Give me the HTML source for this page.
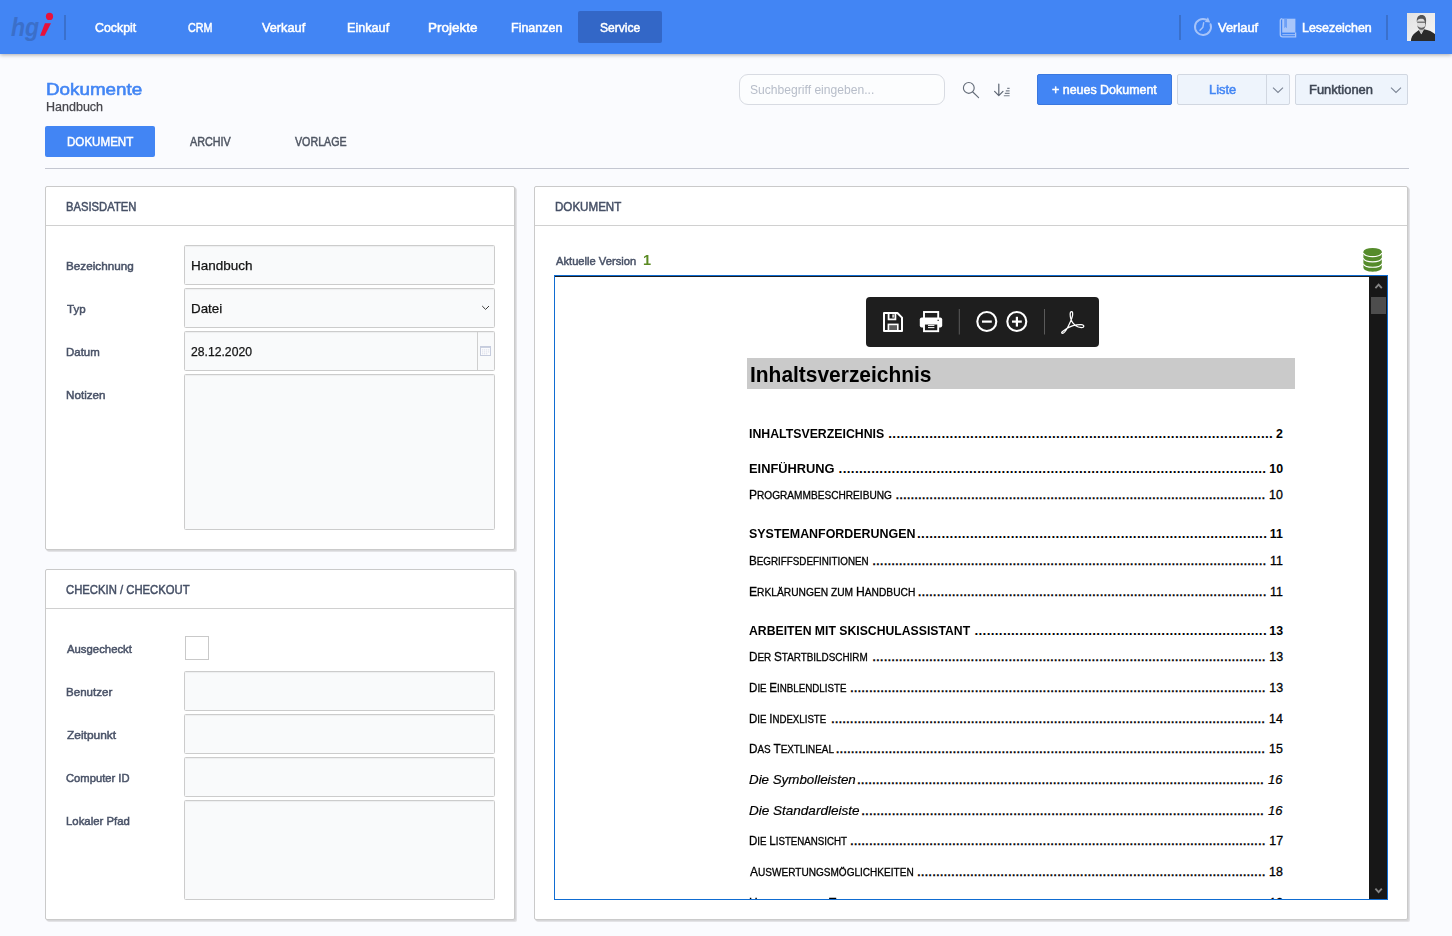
<!DOCTYPE html>
<html lang="de">
<head>
<meta charset="utf-8">
<title>Dokumente - Handbuch</title>
<style>
*{box-sizing:border-box;margin:0;padding:0}
html,body{width:1452px;height:936px;overflow:hidden}
body{background:#fafbfe;font-family:"Liberation Sans",sans-serif;color:#3c4858;position:relative}
.abs{position:absolute}
svg{position:absolute;overflow:visible}
/* generic positioned text: 48px line box, horizontal scale from left edge */
.t{position:absolute;height:48px;line-height:48px;white-space:pre;transform-origin:0 50%;font-family:"Liberation Sans",sans-serif}
.t i{font-style:normal}
/* NAV */
#nav{position:absolute;left:0;top:0;width:1452px;height:54px;background:#4285f4;box-shadow:0 1px 4px rgba(0,0,0,.32)}
.sep{position:absolute;top:15px;width:2px;height:25px;background:#3a70cc}
#svc{position:absolute;left:578px;top:11px;width:84px;height:32px;background:#3367c7;border-radius:2px}
/* HEADER */
#search{position:absolute;left:739px;top:74px;width:206px;height:31px;border:1px solid #d8dbe2;border-radius:9px;background:#fcfdfe}
.btn{position:absolute;top:74px;height:31px;border-radius:2px}
.btn.light{background:#eef4fc;border:1px solid #d1d7e1}
#hr{position:absolute;left:45px;top:168px;width:1364px;height:1px;background:#c4c7d1}
/* PANELS */
.panel{position:absolute;background:#fff;border:1px solid #cacaca;border-radius:2px;box-shadow:1px 1px 0 #d6d6d8,2px 2px 0 #e3e3e6}
.hdline{position:absolute;left:0;right:0;top:38px;height:1px;background:#d0d0d0}
.inp{position:absolute;left:184px;width:311px;height:40px;background:#f9fafb;border:1px solid #cccccc;border-radius:1.5px;box-shadow:inset 0 1px 1px rgba(0,0,0,.05)}
</style>
</head>
<body>
<!-- ================= NAV ================= -->
<nav id="nav">
  <svg style="left:0;top:0" width="80" height="53" viewBox="0 0 80 53">
    <text x="10.9" y="35.7" font-family="Liberation Sans, sans-serif" font-style="italic" font-weight="bold" font-size="26.4" fill="#3b6fc9" textLength="28.2" lengthAdjust="spacingAndGlyphs">hg</text>
    <circle cx="49.5" cy="16.4" r="3.6" fill="#e8113a"/>
    <path d="M44.9 23.2 L51 23.2 L44.6 35.8 L40.1 35.8 Z" fill="#e8113a"/>
  </svg>
  <div class="sep" style="left:64px"></div>
  <div id="svc"></div>
  <div class="sep" style="left:1179px"></div>
  <!-- history icon -->
  <svg style="left:1190px;top:14px" width="26" height="26" viewBox="0 0 26 26" fill="none" stroke="#a6c3f9" stroke-linecap="round">
    <path d="M20.5 10.2 A8 8 0 1 1 16.4 5.7" stroke-width="2"/>
    <path d="M14.9 8.1 L17.9 3.2 L20.2 8.6 Z" fill="#a6c3f9" stroke="none"/>
    <path d="M12.9 13.2 L13.7 8.6 M12.9 13.2 L10 16.3" stroke-width="1.4"/>
  </svg>
  <!-- book icon -->
  <svg style="left:1279px;top:16.6px" width="20" height="22" viewBox="0 0 20 22">
    <path d="M3.2 1.7 H16.4 V15.6 H3.2 Z" fill="#a9c6fa"/>
    <path d="M5.2 1.7 V11.2 L6.6 10 L8 11.2 V1.7 Z" fill="#6ea0f6"/>
    <path d="M3.2 1.7 C2 1.7 1.3 2.5 1.3 3.6 V17.4 C1.3 18.9 2.2 19.8 3.6 19.8 H16.6 V15.6" fill="none" stroke="#a9c6fa" stroke-width="1.3"/>
    <path d="M3.4 17.7 H16.4" stroke="#a9c6fa" stroke-width="1"/>
  </svg>
  <div class="sep" style="left:1386px"></div>
  <!-- avatar -->
  <svg style="left:1407px;top:13px" width="28" height="28" viewBox="0 0 28 28">
    <defs>
      <clipPath id="avc"><rect width="28" height="28"/></clipPath>
      <linearGradient id="avg" x1="0" y1="0" x2="1" y2="1"><stop offset="0" stop-color="#e2e2e2"/><stop offset="1" stop-color="#f6f6f6"/></linearGradient>
      <filter id="avb" x="-10%" y="-10%" width="120%" height="120%"><feGaussianBlur stdDeviation=".45"/></filter>
    </defs>
    <rect width="28" height="28" fill="url(#avg)"/>
    <g clip-path="url(#avc)"><g filter="url(#avb)">
      <path d="M3.8 29 C4 24.4 5.6 21.6 8.6 19.6 L12 17 L14.3 21.2 L16.9 16.2 C21.2 17 25.6 18.6 28.6 21.6 L28.6 29 Z" fill="#2a2a2a"/>
      <path d="M12 14.6 L16.6 14.6 L16.9 16.4 L14.3 21.2 L12 17.2 Z" fill="#c4c4c4"/>
      <ellipse cx="14.2" cy="10.6" rx="4.3" ry="5.3" fill="#dddddd"/>
      <path d="M10.3 12.3 C10.8 15.9 12.6 16.8 14.4 16.8 C16.7 16.8 18.5 15.2 18.7 11.2 C18.1 13.9 16.5 14.7 14.4 14.7 C12.5 14.7 11 14 10.3 12.3 Z" fill="#636363"/>
      <path d="M9.9 9.2 C9.2 4.6 11.5 2 14.6 2 C17.9 2 19.7 4.6 19 9.6 L18.5 13.4 C18.1 10 17.7 7.2 16.5 6.3 C14.5 5.3 12 6 10.6 7 Z" fill="#555"/>
      <rect x="10.2" y="8.5" width="8.1" height="1.5" fill="#7a7a7a"/>
    </g></g>
  </svg>
</nav>

<!-- ================= HEADER ================= -->
<div id="search"></div>
<svg style="left:960px;top:80px" width="22" height="20" viewBox="0 0 22 20" fill="none" stroke="#646c79" stroke-width="1.15" stroke-linecap="round">
  <circle cx="8.8" cy="7.9" r="5.4"/><path d="M12.8 12 L18.6 17.6"/>
</svg>
<svg style="left:992px;top:82px" width="20" height="16" viewBox="0 0 20 16" fill="none" stroke="#5d6573" stroke-width="1.2" stroke-linecap="round" stroke-linejoin="round">
  <path d="M6.8 2 V13.4 M2.6 9.4 L6.8 13.6 L11 9.4"/>
  <path d="M15.2 6.4 H17.6 M13.8 8.9 H17.6 M12.8 11.4 H17.6 M11.8 13.8 H17.6" stroke-width="1.1" stroke-linecap="butt" stroke="#7a818d"/>
</svg>
<div class="btn" style="left:1037px;width:135px;background:#4285f4;border:1px solid #3a77de"></div>
<div class="btn light" style="left:1177px;width:113px"></div>
<div class="abs" style="left:1266px;top:75px;width:1px;height:29px;background:#d1d7e1"></div>
<svg style="left:1272px;top:86px" width="12" height="8" viewBox="0 0 12 8" fill="none" stroke="#7b8494" stroke-width="1.1"><path d="M1 1.6 L6 6.4 L11 1.6"/></svg>
<div class="btn light" style="left:1295px;width:113px"></div>
<svg style="left:1390px;top:86px" width="12" height="8" viewBox="0 0 12 8" fill="none" stroke="#7b8494" stroke-width="1.1"><path d="M1 1.6 L6 6.4 L11 1.6"/></svg>

<!-- ================= TABS ================= -->
<div class="abs" style="left:45px;top:126px;width:110px;height:31px;background:#4285f4;border-radius:2px"></div>
<div id="hr"></div>

<!-- ================= PANEL BASISDATEN ================= -->
<section class="panel" style="left:45px;top:186px;width:470px;height:364px"><div class="hdline"></div></section>
<div class="inp" style="top:245px"></div>
<div class="inp" style="top:288px"></div>
<svg style="left:481px;top:304px" width="10" height="8" viewBox="0 0 10 8" fill="none" stroke="#3a3a3a" stroke-width="1"><path d="M1.2 2 L4.6 5.4 L8 2"/></svg>
<div class="inp" style="top:331px"></div>
<div class="abs" style="left:477px;top:332px;width:1px;height:38px;background:#cfcfcf"></div>
<svg style="left:480px;top:346px" width="11" height="10" viewBox="0 0 11 10">
  <rect x=".5" y=".5" width="10" height="9" fill="#fbfbfd" stroke="#c6ccdd" stroke-width="1"/>
  <rect x=".5" y=".5" width="10" height="1.4" fill="#c6ccdd"/>
  <g fill="#d3d7e4"><rect x="2.2" y="3.4" width="1" height="1"/><rect x="4.2" y="3.4" width="1" height="1"/><rect x="6.2" y="3.4" width="1" height="1"/><rect x="8.2" y="3.4" width="1" height="1"/><rect x="2.2" y="5.4" width="1" height="1"/><rect x="4.2" y="5.4" width="1" height="1"/><rect x="6.2" y="5.4" width="1" height="1"/><rect x="8.2" y="5.4" width="1" height="1"/><rect x="2.2" y="7.3" width="1" height="1"/><rect x="4.2" y="7.3" width="1" height="1"/><rect x="6.2" y="7.3" width="1" height="1"/></g>
</svg>
<div class="inp" style="top:374px;height:156px"></div>

<!-- ================= PANEL CHECKIN ================= -->
<section class="panel" style="left:45px;top:569px;width:470px;height:351px"><div class="hdline"></div></section>
<div class="abs" style="left:185px;top:636px;width:24px;height:24px;background:#fff;border:1px solid #c9c9c9"></div>
<div class="inp" style="top:671px"></div>
<div class="inp" style="top:714px"></div>
<div class="inp" style="top:757px"></div>
<div class="inp" style="top:800px;height:100px"></div>

<!-- ================= PANEL DOKUMENT ================= -->
<section class="panel" style="left:534px;top:186px;width:874px;height:734px"><div class="hdline"></div></section>
<!-- db icon -->
<svg style="left:1363px;top:247px" width="20" height="26" viewBox="0 0 20 26">
  <path d="M.4 5 V20.6 C.4 23 4.6 24.8 9.6 24.8 C14.6 24.8 18.8 23 18.8 20.6 V5 Z" fill="#558b2b"/>
  <ellipse cx="9.6" cy="4.8" rx="9.2" ry="3.9" fill="#558b2b"/>
  <g fill="none" stroke="#fff" stroke-width="1.1"><path d="M.2 6 C1.4 8.4 5 9.6 9.6 9.6 C14.2 9.6 17.8 8.4 19 6"/><path d="M.2 11.3 C1.4 13.7 5 14.9 9.6 14.9 C14.2 14.9 17.8 13.7 19 11.3"/><path d="M.2 16.7 C1.4 19.1 5 20.3 9.6 20.3 C14.2 20.3 17.8 19.1 19 16.7"/></g>
</svg>
<!-- pdf frame -->
<div id="frame" class="abs" style="left:554px;top:275px;width:834px;height:625px;background:#fff;border:1px solid #0f6cd2;overflow:hidden">
  <div class="abs" style="left:0;top:0;width:814px;height:1px;background:#1d1d1d"></div>
  <!-- coordinates inside frame are offset by (555,276) -->
  <div id="pdf" class="abs" style="left:-555px;top:-276px;width:1452px;height:936px">
    <div class="abs" style="left:747px;top:358px;width:548px;height:31px;background:#cacaca"></div>
    <span class="t" style="left:749.55px;top:351px;font-size:21.6px;color:#000;transform:scaleX(0.9694);font-weight:bold;">Inhaltsverzeichnis</span>
    <span class="t" style="left:748.95px;top:410px;font-size:12.4px;color:#000;transform:scaleX(0.9937);font-weight:bold;">INHALTSVERZEICHNIS</span>
    <span class="t" style="left:1276.00px;top:410px;font-size:12.4px;color:#000;transform:scaleX(1.0000);font-weight:bold;">2</span>
    <span class="t" style="left:888.20px;top:410px;font-size:13.5px;color:#000;letter-spacing:0.345px;font-weight:bold;">..............................................................................................</span>
    <span class="t" style="left:748.92px;top:445px;font-size:12.4px;color:#000;transform:scaleX(1.0358);font-weight:bold;">EINFÜHRUNG</span>
    <span class="t" style="left:1269.25px;top:445px;font-size:12.4px;color:#000;transform:scaleX(1.0000);font-weight:bold;">10</span>
    <span class="t" style="left:838.60px;top:445px;font-size:13.5px;color:#000;letter-spacing:0.324px;font-weight:bold;">.........................................................................................................</span>
    <span class="t" style="left:749.27px;top:471px;font-size:12.4px;color:#000;transform:scaleX(0.9719);-webkit-text-stroke:0.3px;">P<i style="font-size:10.42px">ROGRAMMBESCHREIBUNG</i></span>
    <span class="t" style="left:1269.00px;top:471px;font-size:12.4px;color:#000;transform:scaleX(1.0000);-webkit-text-stroke:0.3px;">10</span>
    <span class="t" style="left:895.40px;top:471px;font-size:13.5px;color:#000;letter-spacing:0.024px;-webkit-text-stroke:0.5px;">..................................................................................................</span>
    <span class="t" style="left:749.20px;top:510px;font-size:12.4px;color:#000;transform:scaleX(1.0036);font-weight:bold;">SYSTEMANFORDERUNGEN</span>
    <span class="t" style="left:1269.75px;top:510px;font-size:12.4px;color:#000;transform:scaleX(1.0000);font-weight:bold;">11</span>
    <span class="t" style="left:917.00px;top:510px;font-size:13.5px;color:#000;letter-spacing:0.322px;font-weight:bold;">......................................................................................</span>
    <span class="t" style="left:749.29px;top:537px;font-size:12.4px;color:#000;transform:scaleX(0.9434);-webkit-text-stroke:0.3px;">B<i style="font-size:10.42px">EGRIFFSDEFINITIONEN</i></span>
    <span class="t" style="left:1270.00px;top:537px;font-size:12.4px;color:#000;transform:scaleX(1.0000);-webkit-text-stroke:0.3px;">11</span>
    <span class="t" style="left:872.30px;top:537px;font-size:13.5px;color:#000;letter-spacing:0.037px;-webkit-text-stroke:0.5px;">........................................................................................................</span>
    <span class="t" style="left:749.26px;top:568px;font-size:12.4px;color:#000;transform:scaleX(0.9825);-webkit-text-stroke:0.3px;">E<i style="font-size:10.42px">RKLÄRUNGEN ZUM </i>H<i style="font-size:10.42px">ANDBUCH</i></span>
    <span class="t" style="left:1270.00px;top:568px;font-size:12.4px;color:#000;transform:scaleX(1.0000);-webkit-text-stroke:0.3px;">11</span>
    <span class="t" style="left:917.70px;top:568px;font-size:13.5px;color:#000;letter-spacing:0.040px;-webkit-text-stroke:0.5px;">............................................................................................</span>
    <span class="t" style="left:749.45px;top:607px;font-size:12.4px;color:#000;transform:scaleX(0.9864);font-weight:bold;">ARBEITEN MIT SKISCHULASSISTANT</span>
    <span class="t" style="left:1269.25px;top:607px;font-size:12.4px;color:#000;transform:scaleX(1.0000);font-weight:bold;">13</span>
    <span class="t" style="left:974.50px;top:607px;font-size:13.5px;color:#000;letter-spacing:0.311px;font-weight:bold;">........................................................................</span>
    <span class="t" style="left:749.29px;top:633px;font-size:12.4px;color:#000;transform:scaleX(0.9502);-webkit-text-stroke:0.3px;">D<i style="font-size:10.42px">ER </i>S<i style="font-size:10.42px">TARTBILDSCHIRM</i></span>
    <span class="t" style="left:1269.25px;top:633px;font-size:12.4px;color:#000;transform:scaleX(1.0000);-webkit-text-stroke:0.3px;">13</span>
    <span class="t" style="left:872.30px;top:633px;font-size:13.5px;color:#000;letter-spacing:0.030px;-webkit-text-stroke:0.5px;">........................................................................................................</span>
    <span class="t" style="left:749.30px;top:664px;font-size:12.4px;color:#000;transform:scaleX(0.9372);-webkit-text-stroke:0.3px;">D<i style="font-size:10.42px">IE </i>E<i style="font-size:10.42px">INBLENDLISTE</i></span>
    <span class="t" style="left:1269.25px;top:664px;font-size:12.4px;color:#000;transform:scaleX(1.0000);-webkit-text-stroke:0.3px;">13</span>
    <span class="t" style="left:850.00px;top:664px;font-size:13.5px;color:#000;letter-spacing:0.026px;-webkit-text-stroke:0.5px;">..............................................................................................................</span>
    <span class="t" style="left:749.30px;top:695px;font-size:12.4px;color:#000;transform:scaleX(0.9309);-webkit-text-stroke:0.3px;">D<i style="font-size:10.42px">IE </i>I<i style="font-size:10.42px">NDEXLISTE</i></span>
    <span class="t" style="left:1269.00px;top:695px;font-size:12.4px;color:#000;transform:scaleX(1.0000);-webkit-text-stroke:0.3px;">14</span>
    <span class="t" style="left:831.00px;top:695px;font-size:13.5px;color:#000;letter-spacing:0.024px;-webkit-text-stroke:0.5px;">...................................................................................................................</span>
    <span class="t" style="left:749.29px;top:725px;font-size:12.4px;color:#000;transform:scaleX(0.9500);-webkit-text-stroke:0.3px;">D<i style="font-size:10.42px">AS </i>T<i style="font-size:10.42px">EXTLINEAL</i></span>
    <span class="t" style="left:1269.00px;top:725px;font-size:12.4px;color:#000;transform:scaleX(1.0000);-webkit-text-stroke:0.3px;">15</span>
    <span class="t" style="left:835.70px;top:725px;font-size:13.5px;color:#000;letter-spacing:0.016px;-webkit-text-stroke:0.5px;">..................................................................................................................</span>
    <span class="t" style="left:749.44px;top:756px;font-size:13.0px;color:#000;transform:scaleX(1.0257);-webkit-text-stroke:0.2px;font-style:italic;">Die Symbolleisten</span>
    <span class="t" style="left:1268.00px;top:756px;font-size:13.0px;color:#000;transform:scaleX(1.0000);-webkit-text-stroke:0.2px;font-style:italic;">16</span>
    <span class="t" style="left:857.00px;top:756px;font-size:13.5px;color:#000;letter-spacing:0.015px;-webkit-text-stroke:0.5px;">............................................................................................................</span>
    <span class="t" style="left:749.44px;top:787px;font-size:13.0px;color:#000;transform:scaleX(1.0398);-webkit-text-stroke:0.2px;font-style:italic;">Die Standardleiste</span>
    <span class="t" style="left:1268.00px;top:787px;font-size:13.0px;color:#000;transform:scaleX(1.0000);-webkit-text-stroke:0.2px;font-style:italic;">16</span>
    <span class="t" style="left:861.30px;top:787px;font-size:13.5px;color:#000;letter-spacing:0.046px;-webkit-text-stroke:0.5px;">..........................................................................................................</span>
    <span class="t" style="left:749.30px;top:817px;font-size:12.4px;color:#000;transform:scaleX(0.9343);-webkit-text-stroke:0.3px;">D<i style="font-size:10.42px">IE </i>L<i style="font-size:10.42px">ISTENANSICHT</i></span>
    <span class="t" style="left:1269.25px;top:817px;font-size:12.4px;color:#000;transform:scaleX(1.0000);-webkit-text-stroke:0.3px;">17</span>
    <span class="t" style="left:850.00px;top:817px;font-size:13.5px;color:#000;letter-spacing:0.026px;-webkit-text-stroke:0.5px;">..............................................................................................................</span>
    <span class="t" style="left:750.00px;top:848px;font-size:12.4px;color:#000;transform:scaleX(0.9664);-webkit-text-stroke:0.3px;">A<i style="font-size:10.42px">USWERTUNGSMÖGLICHKEITEN</i></span>
    <span class="t" style="left:1269.00px;top:848px;font-size:12.4px;color:#000;transform:scaleX(1.0000);-webkit-text-stroke:0.3px;">18</span>
    <span class="t" style="left:917.00px;top:848px;font-size:13.5px;color:#000;letter-spacing:0.037px;-webkit-text-stroke:0.5px;">............................................................................................</span>
    <span class="t" style="left:749.27px;top:879px;font-size:12.4px;color:#000;transform:scaleX(0.9700);-webkit-text-stroke:0.3px;">H<i style="font-size:9.67px">AUPTFENSTER </i>T<i style="font-size:9.67px">ABELLEN</i></span>
    <span class="t" style="left:1269.25px;top:879px;font-size:12.4px;color:#000;transform:scaleX(1.0000);-webkit-text-stroke:0.3px;">19</span>
    <span class="t" style="left:880.61px;top:879px;font-size:13.5px;color:#000;letter-spacing:0.023px;-webkit-text-stroke:0.5px;">......................................................................................................</span>
    <!-- toolbar -->
    <div class="abs" style="left:866px;top:297px;width:233px;height:50px;background:#1e1e1e;border-radius:4px"></div>
    <svg style="left:866px;top:297px" width="233" height="50" viewBox="866 297 233 50">
      <!-- save -->
      <path d="M884 313 H897.4 L902 317.6 V331 H884 Z" fill="none" stroke="#fff" stroke-width="2" stroke-linejoin="round"/>
      <path d="M888.6 313 V319.4 H895.4 V313" fill="none" stroke="#fff" stroke-width="1.8"/>
      <rect x="892.4" y="314.4" width="1.4" height="3.2" fill="#fff"/>
      <rect x="888.4" y="324.4" width="9.4" height="6.4" fill="#5c5c5c" stroke="#fff" stroke-width="1.6"/>
      <!-- print -->
      <rect x="924" y="312" width="14.2" height="7" fill="#1e1e1e" stroke="#fff" stroke-width="1.9"/>
      <rect x="919.8" y="317.4" width="22.4" height="10" rx="2" fill="#fff"/>
      <rect x="924" y="323.6" width="14.2" height="7.6" fill="#1e1e1e" stroke="#fff" stroke-width="1.9"/>
      <rect x="928" y="324.9" width="6.4" height="1" fill="#fff"/><rect x="928" y="327.1" width="6.4" height="1" fill="#fff"/>
      <rect x="937.4" y="319.8" width="1.6" height="1" fill="#333"/>
      <!-- sep -->
      <rect x="958.8" y="309" width="1" height="25.5" fill="#5a5a5a"/>
      <!-- minus -->
      <circle cx="986.8" cy="321.5" r="9.5" fill="none" stroke="#fff" stroke-width="2.1"/>
      <rect x="982" y="320.5" width="9.8" height="2.2" fill="#fff"/>
      <!-- plus -->
      <circle cx="1016.8" cy="321.5" r="9.5" fill="none" stroke="#fff" stroke-width="2.1"/>
      <rect x="1012" y="320.5" width="9.8" height="2.2" fill="#fff"/><rect x="1015.8" y="316.8" width="2.2" height="9.8" fill="#fff"/>
      <!-- sep -->
      <rect x="1044" y="309" width="1" height="25.5" fill="#5a5a5a"/>
      <!-- acrobat -->
      <path d="M1071.6 311.6 C1069.6 311.6 1070 316 1071 319.4 C1072.6 324.8 1077.4 327.4 1081.4 327.6 C1084.6 327.7 1084.6 324.9 1081.2 324.7 C1076.4 324.5 1070.4 326.2 1066.8 328.6 C1063.4 330.9 1060.6 332.6 1062 333.2 C1063.8 333.8 1066.4 330 1068.4 326 C1070.6 321.6 1073.2 315.2 1072.6 312.6 C1072.4 311.9 1072 311.6 1071.6 311.6 Z" fill="none" stroke="#fff" stroke-width="1.25" stroke-linejoin="round"/>
    </svg>
  </div>
  <!-- scrollbar -->
  <div class="abs" style="left:814px;top:0;width:18px;height:623px;background:#171717"></div>
  <div class="abs" style="left:816px;top:21px;width:15px;height:17px;background:#4d4d4d"></div>
  <svg style="left:819px;top:6px" width="10" height="8" viewBox="0 0 10 8" fill="none" stroke="#868686" stroke-width="1.8"><path d="M1.4 6.2 L4.6 2.6 L7.8 6.2"/></svg>
  <svg style="left:819px;top:611px" width="10" height="8" viewBox="0 0 10 8" fill="none" stroke="#868686" stroke-width="1.8"><path d="M1.4 1.6 L4.6 5.2 L7.8 1.6"/></svg>
</div>

<!-- ================= UI TEXT ================= -->
<span class="t" style="left:95.31px;top:4px;font-size:12.5px;color:#ffffff;transform:scaleX(0.9891);-webkit-text-stroke:0.5px;">Cockpit</span>
<span class="t" style="left:188.27px;top:4px;font-size:12.5px;color:#ffffff;transform:scaleX(0.8550);-webkit-text-stroke:0.5px;">CRM</span>
<span class="t" style="left:262.45px;top:4px;font-size:12.5px;color:#ffffff;transform:scaleX(1.0186);-webkit-text-stroke:0.5px;">Verkauf</span>
<span class="t" style="left:346.64px;top:4px;font-size:12.5px;color:#ffffff;transform:scaleX(1.0109);-webkit-text-stroke:0.5px;">Einkauf</span>
<span class="t" style="left:427.59px;top:4px;font-size:12.5px;color:#ffffff;transform:scaleX(1.0771);-webkit-text-stroke:0.5px;">Projekte</span>
<span class="t" style="left:510.65px;top:4px;font-size:12.5px;color:#ffffff;transform:scaleX(0.9990);-webkit-text-stroke:0.5px;">Finanzen</span>
<span class="t" style="left:600.16px;top:4px;font-size:12.5px;color:#ffffff;transform:scaleX(0.9673);-webkit-text-stroke:0.5px;">Service</span>
<span class="t" style="left:1217.86px;top:4px;font-size:12.5px;color:#ffffff;transform:scaleX(1.0329);-webkit-text-stroke:0.5px;">Verlauf</span>
<span class="t" style="left:1302.25px;top:4px;font-size:12.5px;color:#ffffff;transform:scaleX(0.9942);-webkit-text-stroke:0.5px;">Lesezeichen</span>
<span class="t" style="left:46.01px;top:65px;font-size:17.3px;color:#4285f4;transform:scaleX(1.0885);-webkit-text-stroke:0.6px;">Dokumente</span>
<span class="t" style="left:45.82px;top:83px;font-size:12.8px;color:#48484e;transform:scaleX(0.9780);-webkit-text-stroke:0.25px;">Handbuch</span>
<span class="t" style="left:750.17px;top:66px;font-size:12.5px;color:#b7bdc9;transform:scaleX(0.9684);">Suchbegriff eingeben...</span>
<span class="t" style="left:1052.45px;top:66px;font-size:12.5px;color:#ffffff;transform:scaleX(0.9957);-webkit-text-stroke:0.5px;">+ neues Dokument</span>
<span class="t" style="left:1208.53px;top:66px;font-size:12.5px;color:#4285f4;transform:scaleX(1.0297);-webkit-text-stroke:0.5px;">Liste</span>
<span class="t" style="left:1308.92px;top:66px;font-size:12.5px;color:#3e4654;transform:scaleX(1.0347);-webkit-text-stroke:0.5px;">Funktionen</span>
<span class="t" style="left:67.00px;top:118px;font-size:12.5px;color:#ffffff;transform:scaleX(0.9272);-webkit-text-stroke:0.5px;">DOKUMENT</span>
<span class="t" style="left:189.62px;top:118px;font-size:12.5px;color:#4f5663;transform:scaleX(0.8628);-webkit-text-stroke:0.5px;">ARCHIV</span>
<span class="t" style="left:294.81px;top:118px;font-size:12.5px;color:#4f5663;transform:scaleX(0.8545);-webkit-text-stroke:0.5px;">VORLAGE</span>
<span class="t" style="left:66.13px;top:183px;font-size:12.5px;color:#465066;transform:scaleX(0.8990);-webkit-text-stroke:0.5px;">BASISDATEN</span>
<span class="t" style="left:65.94px;top:242px;font-size:11.6px;color:#4a5368;transform:scaleX(1.0099);-webkit-text-stroke:0.5px;">Bezeichnung</span>
<span class="t" style="left:66.70px;top:285px;font-size:11.6px;color:#4a5368;transform:scaleX(0.9946);-webkit-text-stroke:0.5px;">Typ</span>
<span class="t" style="left:65.96px;top:328px;font-size:11.6px;color:#4a5368;transform:scaleX(0.9879);-webkit-text-stroke:0.5px;">Datum</span>
<span class="t" style="left:65.95px;top:371px;font-size:11.6px;color:#4a5368;transform:scaleX(1.0053);-webkit-text-stroke:0.5px;">Notizen</span>
<span class="t" style="left:190.98px;top:242px;font-size:13.2px;color:#141414;transform:scaleX(1.0239);-webkit-text-stroke:0.25px;">Handbuch</span>
<span class="t" style="left:190.99px;top:285px;font-size:13.2px;color:#141414;transform:scaleX(1.0138);-webkit-text-stroke:0.25px;">Datei</span>
<span class="t" style="left:191.20px;top:328px;font-size:12.2px;color:#141414;transform:scaleX(0.9992);-webkit-text-stroke:0.25px;">28.12.2020</span>
<span class="t" style="left:66.05px;top:566px;font-size:12.5px;color:#465066;transform:scaleX(0.9035);-webkit-text-stroke:0.5px;">CHECKIN / CHECKOUT</span>
<span class="t" style="left:66.74px;top:625px;font-size:11.6px;color:#4a5368;transform:scaleX(0.9783);-webkit-text-stroke:0.5px;">Ausgecheckt</span>
<span class="t" style="left:65.75px;top:668px;font-size:11.6px;color:#4a5368;transform:scaleX(0.9967);-webkit-text-stroke:0.5px;">Benutzer</span>
<span class="t" style="left:66.50px;top:711px;font-size:11.6px;color:#4a5368;transform:scaleX(1.0304);-webkit-text-stroke:0.5px;">Zeitpunkt</span>
<span class="t" style="left:66.26px;top:754px;font-size:11.6px;color:#4a5368;transform:scaleX(0.9670);-webkit-text-stroke:0.5px;">Computer ID</span>
<span class="t" style="left:65.76px;top:797px;font-size:11.6px;color:#4a5368;transform:scaleX(0.9804);-webkit-text-stroke:0.5px;">Lokaler Pfad</span>
<span class="t" style="left:555.10px;top:183px;font-size:12.5px;color:#465066;transform:scaleX(0.9272);-webkit-text-stroke:0.5px;">DOKUMENT</span>
<span class="t" style="left:556.04px;top:237px;font-size:11.6px;color:#4a5368;transform:scaleX(0.9639);-webkit-text-stroke:0.5px;">Aktuelle Version</span>
<span class="t" style="left:643.42px;top:236px;font-size:14px;color:#5a8a22;transform:scaleX(1.0370);font-weight:bold;">1</span>
</body>
</html>
